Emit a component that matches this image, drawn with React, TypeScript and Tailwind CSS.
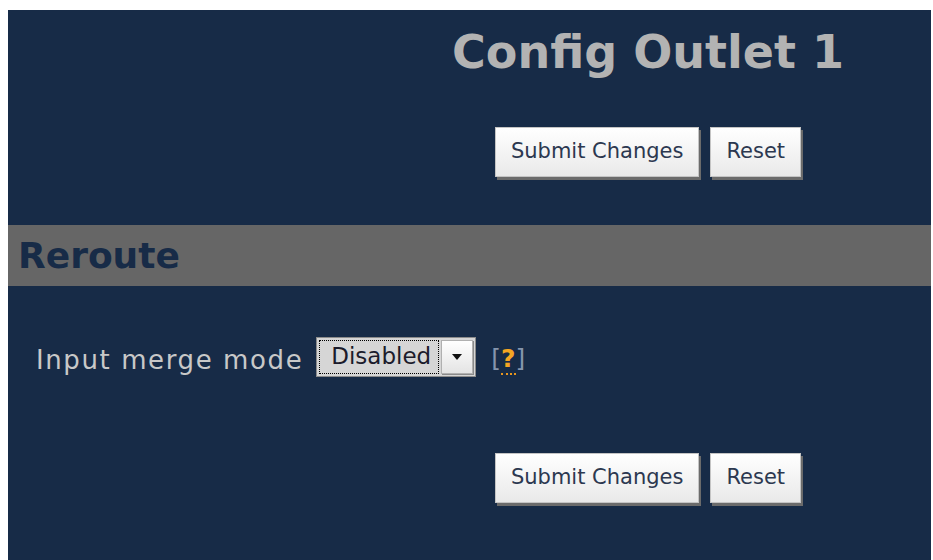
const FONT = "font-['DejaVu_Sans',Verdana,sans-serif]";

function ActionButton({ label }: { label: string }) {
  return (
    <button
      type="button"
      className={`${FONT} h-[50px] border border-[#c4c4c4] bg-gradient-to-b from-white to-[#e9e9e9] px-[15px] text-[21px] text-[#2c3850] shadow-[2px_3px_0_#6b6b6b]`}
    >
      {label}
    </button>
  );
}

function ButtonRow() {
  return (
    <div className="flex gap-[11px]">
      <ActionButton label="Submit Changes" />
      <ActionButton label="Reset" />
    </div>
  );
}

function MergeSelect() {
  return (
    <div className="flex h-[40px] w-[160px] border border-[#8c8c8c] bg-[#d6d6d6] p-[2px]">
      <div
        className={`${FONT} flex flex-1 items-center border border-dotted border-black pl-[11px] text-[23px] text-[#1c1c2c]`}
      >
        Disabled
      </div>
      <div className="ml-[2px] flex w-[32px] items-center justify-center border border-[#b0b0b0] bg-gradient-to-b from-white to-[#e4e4e4] shadow-[1px_1px_0_#8a8a8a]">
        <svg width="12" height="8" viewBox="0 0 12 8">
          <path d="M1 1h10L6 7z" fill="#111" />
        </svg>
      </div>
    </div>
  );
}

export default function App() {
  return (
    <div className="h-[560px] bg-white pl-[8px] pr-[2px] pt-[10px]">
      <div className="flex h-full flex-col bg-[#172b47]">
        <div className="flex flex-col items-center pl-[357px]">
          <h1
            className={`${FONT} mt-[19px] text-[46px] font-bold leading-[46px] text-[#b3b3b3]`}
          >
            Config Outlet 1
          </h1>
          <div className="mt-[52px]">
            <ButtonRow />
          </div>
        </div>

        <div className="mt-[48px] flex h-[61px] items-center bg-[#666666] pl-[10px]">
          <h2 className={`${FONT} text-[36px] font-bold text-[#172b47]`}>Reroute</h2>
        </div>

        <div className="mt-[47px] flex items-center pl-[28px]">
          <label
            className={`${FONT} mr-[13px] pt-[8px] text-[26px] tracking-[1.6px] text-[#c8c8c8]`}
          >
            Input merge mode
          </label>
          <MergeSelect />
          <a className={`${FONT} ml-[15px] pt-[4px] text-[25px] text-[#8595ad]`}>
            [
            <span className="border-b-2 border-dotted border-[#e8961e] font-bold text-[#f5a623]">
              ?
            </span>
            ]
          </a>
        </div>

        <div className="mt-[73px] flex justify-center pl-[357px]">
          <ButtonRow />
        </div>
      </div>
    </div>
  );
}
